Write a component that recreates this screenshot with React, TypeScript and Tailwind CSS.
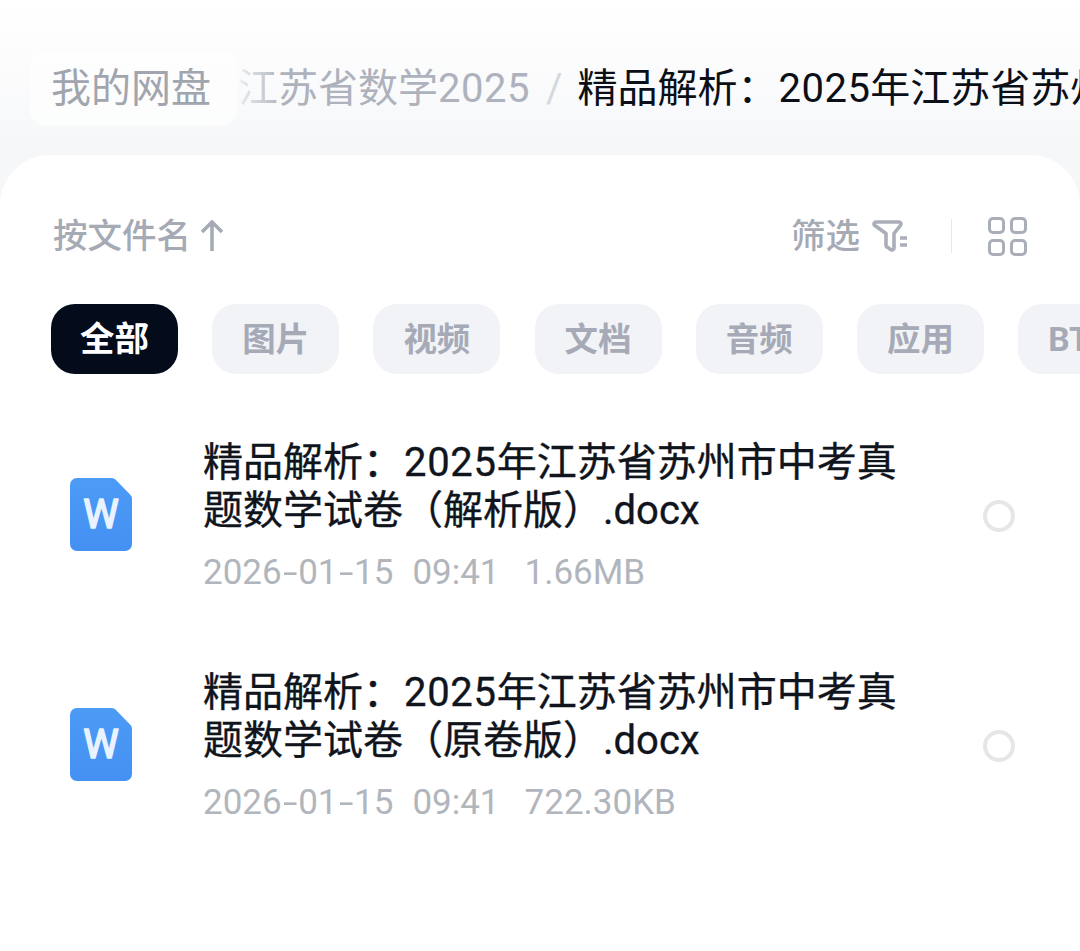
const font = { fontFamily: '"Roboto", "Noto Sans CJK SC", sans-serif' };

const tabs = ["图片", "视频", "文档", "音频", "应用", "BT"];

const files = [
  { name: "题数学试卷（解析版）.docx", size: "1.66MB" },
  { name: "题数学试卷（原卷版）.docx", size: "722.30KB" },
];

const Dash = () => <span className="inline-block w-[16.5px] text-center scale-x-150">-</span>;

const WordIcon = () => (
  <svg width="62" height="73" viewBox="0 0 62 73" className="shrink-0">
    <defs>
      <linearGradient id="doc" x1="0" y1="0" x2="0" y2="1">
        <stop offset="0" stopColor="#4c9bf5" />
        <stop offset="1" stopColor="#4490f3" />
      </linearGradient>
    </defs>
    <path d="M7 0H42a5 5 0 0 1 3.5 1.5L60.5 17a5 5 0 0 1 1.5 3.5V66a7 7 0 0 1-7 7H7a7 7 0 0 1-7-7V7a7 7 0 0 1 7-7Z" fill="url(#doc)" />
    <text
      x="31"
      y="50"
      textAnchor="middle"
      fontSize="40"
      fontWeight="400"
      fill="#e8f3ff"
      stroke="#e8f3ff"
      strokeWidth="1.6"
      strokeLinejoin="round"
    >
      W
    </text>
  </svg>
);

const App = () => {
  return (
    <div style={font} className="w-[1080px] h-[951px] overflow-hidden bg-gradient-to-b from-white to-[#f6f7f9] to-[155px]">
      <div className="h-[155px] pt-[51px] pl-[30px] flex items-start whitespace-nowrap overflow-hidden">
        <div className="h-[75px] w-[207px] shrink-0 rounded-[16px] bg-white/60 pl-[21px] flex items-center text-[40px] text-[#a0a5ae] leading-none">
          我的网盘
        </div>
        <div className="h-[75px] ml-[1px] flex items-center text-[40px] leading-none">
          <span className="bg-gradient-to-r from-[#eceef0] to-[#b5bac3] bg-clip-text text-transparent">江</span>
          <span className="text-[#adb2bc]">
            苏省数学<span className="tracking-[0.5px]">2025</span>
          </span>
          <span className="text-[#d5d8de] ml-[16px] mr-[15px]">/</span>
          <span className="text-[#0b0f17]">
            精品解析：<span className="tracking-[0.5px] ml-[1px]">2025</span>年江苏省苏州市中考真题数学试卷
          </span>
        </div>
      </div>

      <div className="h-[796px] bg-white rounded-t-[50px]">
        <div className="h-[149px] pt-[60px] pl-[53px] pr-[53px] flex items-start justify-between">
          <div className="h-[42px] flex items-center text-[#a5aab4] text-[34.5px] font-medium leading-none">
            按文件名
            <svg width="26" height="32" viewBox="0 0 26 32" fill="none" stroke="#a5aab4" strokeWidth="3.6" className="ml-[8px]">
              <path d="M13 31V2M3 12 13 2l10 10" />
            </svg>
          </div>
          <div className="h-[42px] flex items-center">
            <span className="text-[#a5aab4] text-[34.5px] font-medium leading-none">筛选</span>
            <svg width="36" height="34" viewBox="0 0 36 34" fill="none" stroke="#a9aeb8" strokeWidth="3.6" strokeLinejoin="round" className="ml-[12px]">
              <path d="M4 3H27a2 2 0 0 1 1.5 3.3L22 14.5V29a2 2 0 0 1-3 1.7l-3.5-2.4A2 2 0 0 1 14 26.5V14.5L2.5 6.3A2 2 0 0 1 4 3Z" />
              <path d="M28 19h7M28 26h7" />
            </svg>
            <div className="w-px h-[34px] bg-[#e6e8ec] ml-[43px] mr-[36px]" />
            <div className="grid grid-cols-2 gap-[5px]">
              <div className="w-[17px] h-[17px] rounded-[5px] border-[3.5px] border-[#a9aeb8]" />
              <div className="w-[17px] h-[17px] rounded-[5px] border-[3.5px] border-[#a9aeb8]" />
              <div className="w-[17px] h-[17px] rounded-[5px] border-[3.5px] border-[#a9aeb8]" />
              <div className="w-[17px] h-[17px] rounded-[5px] border-[3.5px] border-[#a9aeb8]" />
            </div>
          </div>
        </div>

        <div className="flex gap-[34.2px] pl-[51px] whitespace-nowrap overflow-hidden">
          <div className="h-[70px] shrink-0 px-[29px] pt-[2px] rounded-[24px] bg-[#040b1a] text-white text-[34.5px] font-bold flex items-center justify-center">
            全部
          </div>
          {tabs.map((tab) => (
            <div
              key={tab}
              className="h-[70px] shrink-0 px-[30px] pt-[2px] rounded-[24px] bg-[#f2f3f7] text-[#a5aab6] text-[33.5px] font-bold flex items-center justify-center"
            >
              {tab}
            </div>
          ))}
        </div>

        <div className="pt-[64px]">
          {files.map((file) => (
            <div key={file.size} className="h-[229.5px] flex items-start pl-[70px]">
              <div className="pt-[40px]">
                <WordIcon />
              </div>
              <div className="w-[700px] ml-[71px] pt-[1px]">
                <div className="text-[40px] leading-[48px] text-[#10141c] [-webkit-text-stroke:0.35px_#10141c]">
                  精品解析：<span className="tracking-[0.7px] ml-[1px]">2025</span>年江苏省苏州市中考真{file.name}
                </div>
                <div className="mt-[14px] text-[#b1b5bc] text-[35px] leading-[48px] whitespace-nowrap">
                  2026<Dash />01<Dash />15
                  <span className="ml-[19px]">09:41</span>
                  <span className="ml-[25px]">{file.size}</span>
                </div>
              </div>
              <div className="ml-[80px] mt-[62px] w-[32px] h-[32px] rounded-full border-[4px] border-[#e5e6e8]" />
            </div>
          ))}
        </div>
      </div>
    </div>
  );
};

export default App;
